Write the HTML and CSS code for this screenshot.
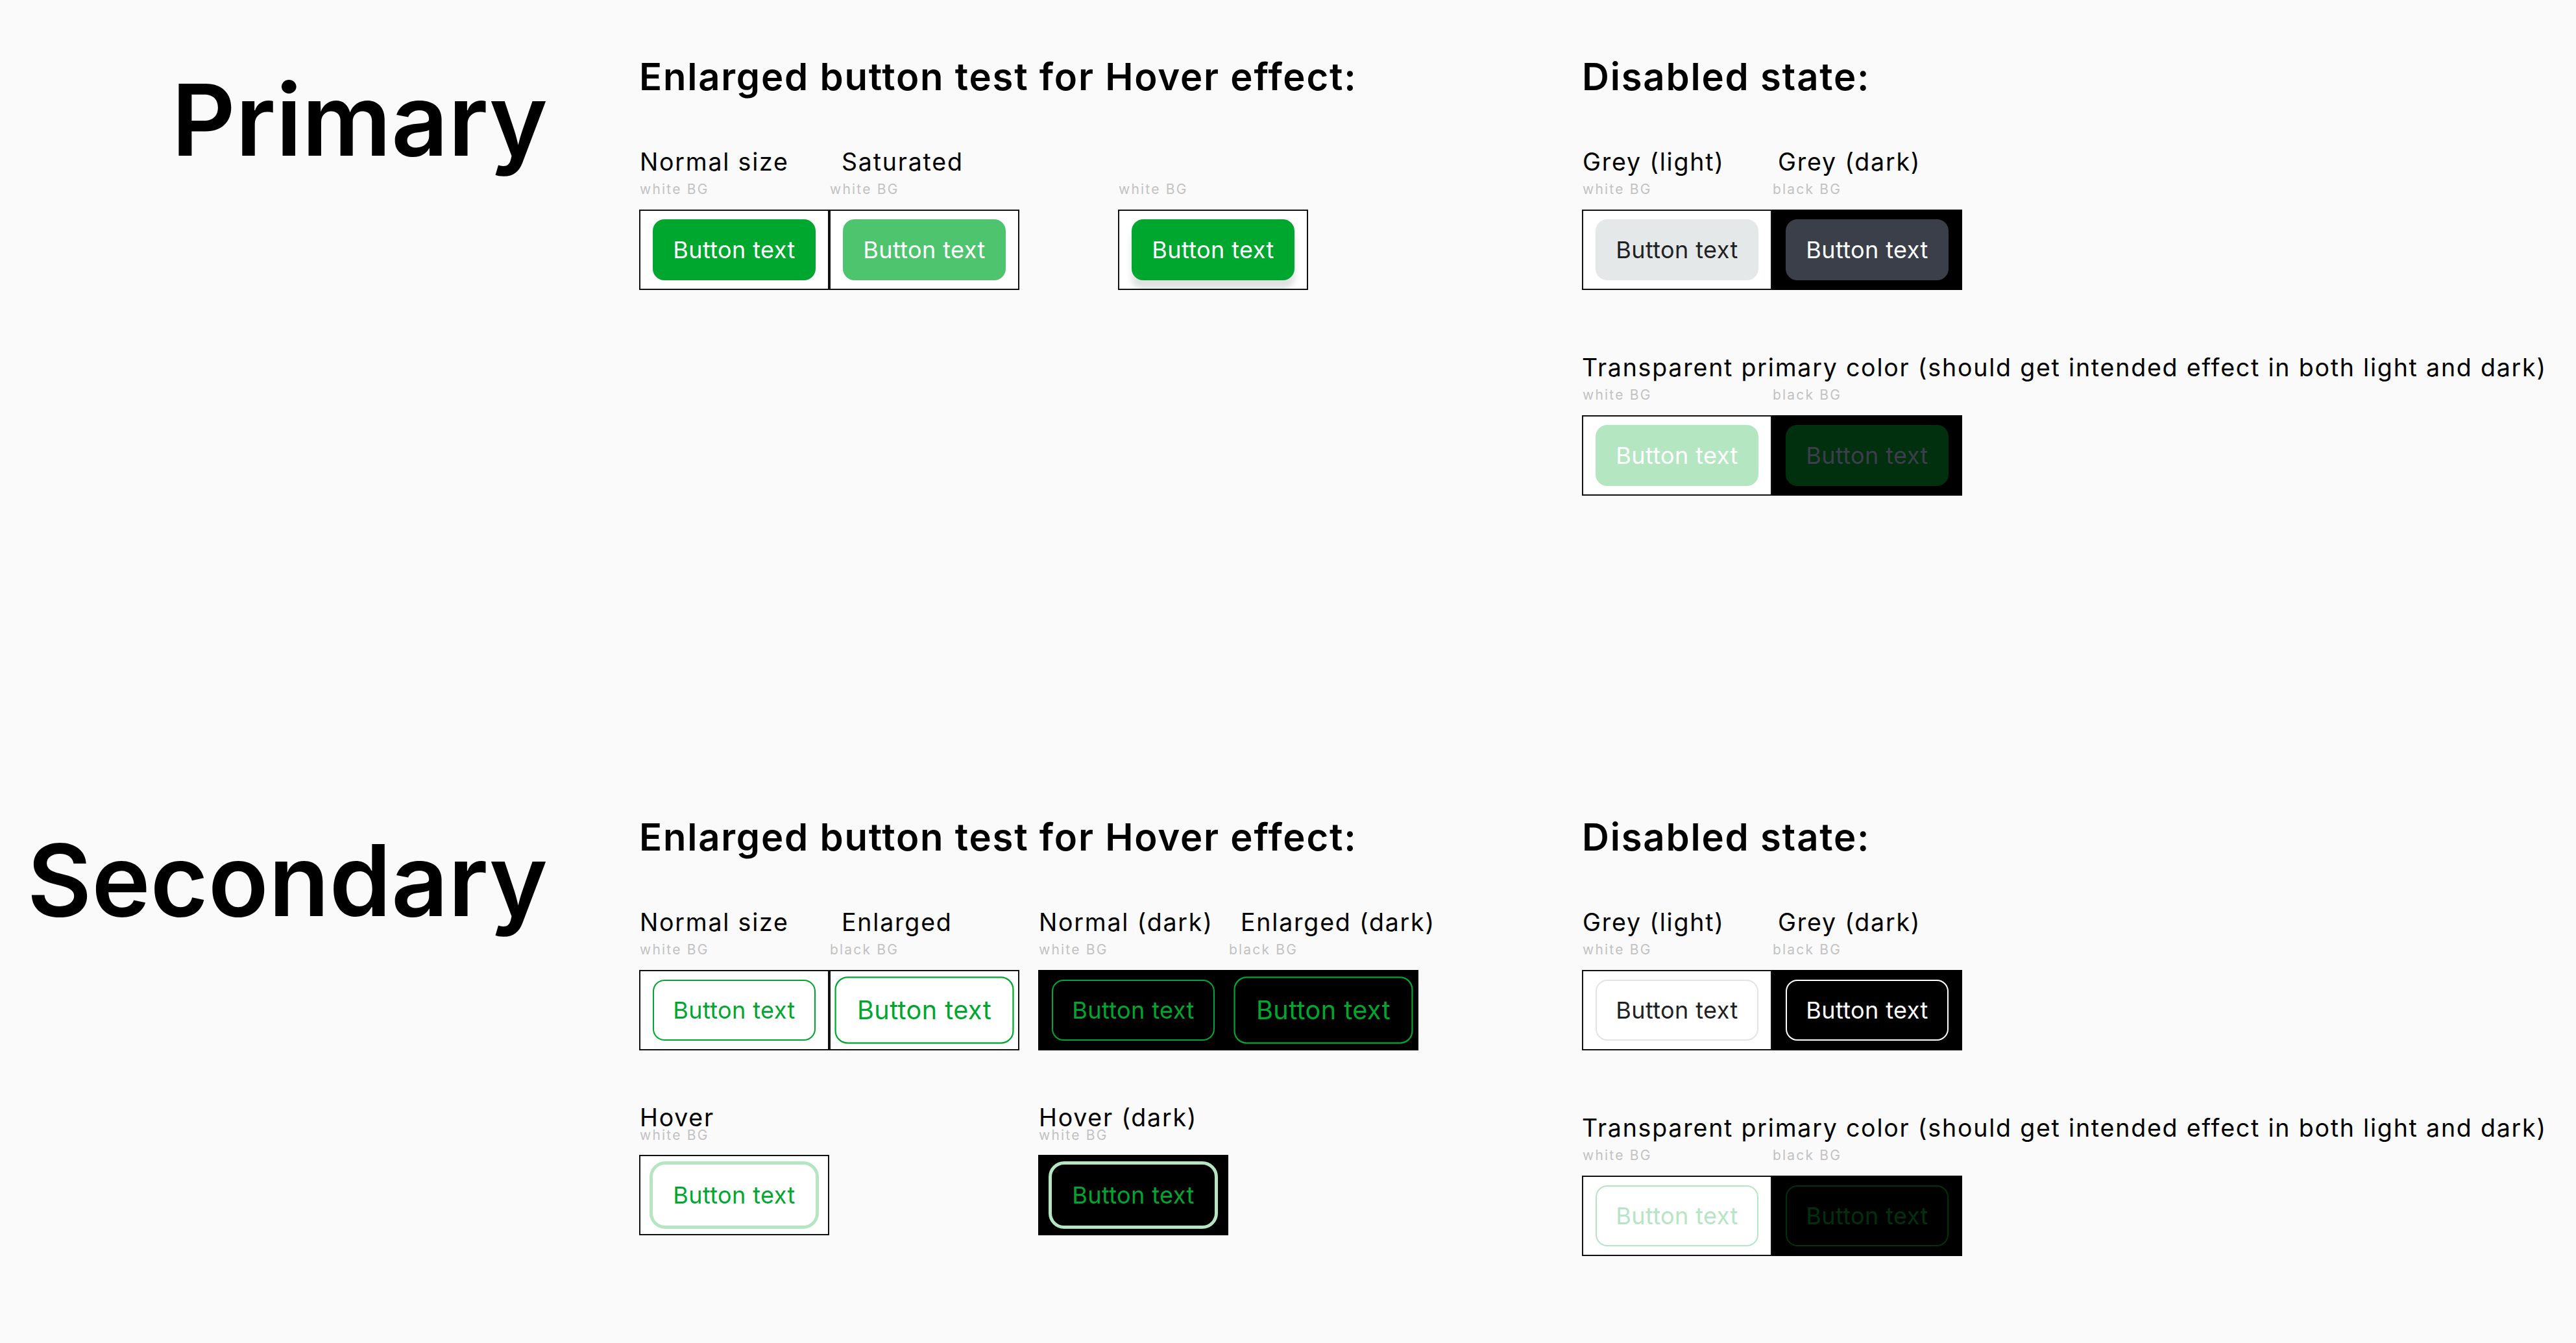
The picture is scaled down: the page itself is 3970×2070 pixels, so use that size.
FILE: index.html
```html
<!DOCTYPE html>
<html lang="en">
<head>
<meta charset="utf-8">
<title>Button states</title>
<link rel="stylesheet" href="styles.css">
</head>
<body>
<div class="page">

  <section class="section">
    <h1 class="title">Primary</h1>
    <div class="mid">
      <h2 class="heading">Enlarged button test for Hover effect:</h2>
      <div class="row row-first">
        <div class="group">
          <div class="heads">
            <div class="head"><div class="label">Normal size</div><div class="sub">white BG</div></div>
            <div class="head"><div class="label shift-mid">Saturated</div><div class="sub">white BG</div></div>
          </div>
          <div class="box">
            <div class="cell light"><div class="btn p-normal">Button text</div></div>
            <div class="cell light"><div class="btn p-saturated">Button text</div></div>
          </div>
        </div>
        <div class="group group-far">
          <div class="heads">
            <div class="head"><div class="label"></div><div class="sub">white BG</div></div>
          </div>
          <div class="box">
            <div class="cell light clip"><div class="btn p-normal p-shadow">Button text</div></div>
          </div>
        </div>
      </div>
    </div>
    <div class="right">
      <h2 class="heading">Disabled state:</h2>
      <div class="row row-first">
        <div class="group">
          <div class="heads">
            <div class="head"><div class="label">Grey (light)</div><div class="sub">white BG</div></div>
            <div class="head"><div class="label shift-right">Grey (dark)</div><div class="sub">black BG</div></div>
          </div>
          <div class="box">
            <div class="cell light"><div class="btn p-grey-light">Button text</div></div>
            <div class="cell dark"><div class="btn p-grey-dark">Button text</div></div>
          </div>
        </div>
      </div>
      <div class="row row-next">
        <div class="group">
          <div class="label wide">Transparent primary color (should get intended effect in both light and dark)</div>
          <div class="heads">
            <div class="head"><div class="sub">white BG</div></div>
            <div class="head"><div class="sub">black BG</div></div>
          </div>
          <div class="box">
            <div class="cell light"><div class="btn p-trans-light">Button text</div></div>
            <div class="cell dark"><div class="btn p-trans-dark">Button text</div></div>
          </div>
        </div>
      </div>
    </div>
  </section>

  <section class="section">
    <h1 class="title">Secondary</h1>
    <div class="mid">
      <h2 class="heading">Enlarged button test for Hover effect:</h2>
      <div class="row row-first">
        <div class="group">
          <div class="heads">
            <div class="head"><div class="label">Normal size</div><div class="sub">white BG</div></div>
            <div class="head"><div class="label shift-mid">Enlarged</div><div class="sub">black BG</div></div>
          </div>
          <div class="box">
            <div class="cell light"><div class="btn s-light">Button text</div></div>
            <div class="cell light"><div class="btn s-light enlarged">Button text</div></div>
          </div>
        </div>
        <div class="group group-near">
          <div class="heads">
            <div class="head"><div class="label">Normal (dark)</div><div class="sub">white BG</div></div>
            <div class="head"><div class="label shift-mid">Enlarged (dark)</div><div class="sub">black BG</div></div>
          </div>
          <div class="box">
            <div class="cell dark"><div class="btn s-dark">Button text</div></div>
            <div class="cell dark"><div class="btn s-dark enlarged">Button text</div></div>
          </div>
        </div>
      </div>
      <div class="row row-hover">
        <div class="group">
          <div class="heads">
            <div class="head"><div class="label">Hover</div><div class="sub tight">white BG</div></div>
          </div>
          <div class="box box-tight">
            <div class="cell light"><div class="btn s-light s-hover">Button text</div></div>
          </div>
        </div>
        <div class="group group-hover">
          <div class="heads">
            <div class="head"><div class="label">Hover (dark)</div><div class="sub tight">white BG</div></div>
          </div>
          <div class="box box-tight">
            <div class="cell dark"><div class="btn s-dark s-hover">Button text</div></div>
          </div>
        </div>
      </div>
    </div>
    <div class="right">
      <h2 class="heading">Disabled state:</h2>
      <div class="row row-first">
        <div class="group">
          <div class="heads">
            <div class="head"><div class="label">Grey (light)</div><div class="sub">white BG</div></div>
            <div class="head"><div class="label shift-right">Grey (dark)</div><div class="sub">black BG</div></div>
          </div>
          <div class="box">
            <div class="cell light"><div class="btn s-grey-light">Button text</div></div>
            <div class="cell dark"><div class="btn s-grey-dark">Button text</div></div>
          </div>
        </div>
      </div>
      <div class="row row-next">
        <div class="group">
          <div class="label wide">Transparent primary color (should get intended effect in both light and dark)</div>
          <div class="heads">
            <div class="head"><div class="sub">white BG</div></div>
            <div class="head"><div class="sub">black BG</div></div>
          </div>
          <div class="box">
            <div class="cell light"><div class="btn s-trans-light">Button text</div></div>
            <div class="cell dark"><div class="btn s-trans-dark">Button text</div></div>
          </div>
        </div>
      </div>
    </div>
  </section>

</div>
</body>
</html>
```
FILE: styles.css
```css
* {
  box-sizing: border-box;
}

body {
  margin: 0;
  background: #fafafa;
  color: #000;
  font-family: Inter, "Noto Sans", "Liberation Sans", sans-serif;
}

.page {
  padding-top: 89px;
}

.section {
  display: flex;
  align-items: flex-start;
}

.section + .section {
  margin-top: 497px;
}

.title {
  flex: 0 0 844px;
  margin: 19px 0 0 0;
  font-size: 153px;
  line-height: 1;
  font-weight: 600;
  text-align: right;
}

.mid {
  flex: 0 0 1453px;
  margin-left: 141px;
}

.right {
  flex: 1 1 auto;
}

.heading {
  margin: 0;
  font-size: 58px;
  line-height: 1;
  font-weight: 600;
  letter-spacing: 1.8px;
  white-space: nowrap;
}

.row {
  display: flex;
  align-items: flex-start;
}

.row-first {
  margin-top: 83.7px;
}

.row-next {
  margin-top: 100.6px;
}

.row-hover {
  margin-top: 85px;
}

.group {
  display: flex;
  flex-direction: column;
}

.group-far {
  margin-left: 152px;
}

.group-near {
  margin-left: 29px;
}

.group-hover {
  margin-left: 322px;
}

.heads {
  display: flex;
}

.head {
  width: 293px;
  display: flex;
  flex-direction: column;
  padding-left: 1px;
}

.label {
  height: 37.5px;
  font-size: 37.5px;
  line-height: 1;
  font-weight: 400;
  letter-spacing: 1.8px;
  white-space: nowrap;
}

.shift-mid {
  padding-left: 18px;
}

.shift-right {
  padding-left: 8px;
}

.sub {
  margin-top: 12.6px;
  height: 21px;
  font-size: 21px;
  line-height: 1;
  letter-spacing: 2.2px;
  color: #c2c2c2;
  white-space: nowrap;
}

.sub.tight {
  margin-top: -2.9px;
}

.box {
  display: flex;
  margin-top: 20.8px;
}

.box-tight {
  margin-top: 19.8px;
}

.cell {
  width: 293px;
  height: 124.5px;
  border: 2.5px solid #111;
  display: flex;
  align-items: center;
  justify-content: center;
}

.cell.light {
  background: #fff;
}

.cell.dark {
  background: #000;
  border-color: #000;
}

.cell.clip {
  overflow: hidden;
}

.btn {
  width: 251px;
  height: 94px;
  border-radius: 18px;
  display: flex;
  align-items: center;
  justify-content: center;
  font-size: 36px;
  line-height: 1;
  font-weight: 400;
  letter-spacing: 0.4px;
  white-space: nowrap;
  flex-shrink: 0;
}

.enlarged {
  transform: scale(1.1);
}

/* Primary */
.p-normal {
  background: #00a72e;
  color: #fff;
}

.p-saturated {
  background: #4fc46f;
  color: #fff;
}

.p-shadow {
  box-shadow: 0 14px 10px rgba(60, 70, 70, 0.16);
}

.p-grey-light {
  background: #e5e8e8;
  color: #1e2126;
}

.p-grey-dark {
  background: #3a3f49;
  color: #fff;
}

.p-trans-light {
  background: #b4e6c2;
  color: #fff;
}

.p-trans-dark {
  background: #00300e;
  color: #3c3f4b;
}

/* Secondary */
.s-light {
  background: #fff;
  border: 2.5px solid #00a72e;
  color: #00a72e;
}

.s-dark {
  background: #000;
  border: 2.5px solid #00a72e;
  color: #00a72e;
}

.s-hover {
  width: 261px;
  height: 104px;
  border-width: 5.5px;
  border-color: #b6e5c4;
  border-radius: 24px;
}

.s-grey-light {
  background: #fff;
  border: 2.5px solid #e4e4e4;
  color: #1e2126;
}

.s-grey-dark {
  background: #000;
  border: 2.5px solid #fff;
  color: #fff;
}

.s-trans-light {
  background: #fff;
  border: 2.5px solid #b6e5c4;
  color: #b6e5c4;
}

.s-trans-dark {
  background: #000;
  border: 2.5px solid #00300e;
  color: #00300e;
}
```
